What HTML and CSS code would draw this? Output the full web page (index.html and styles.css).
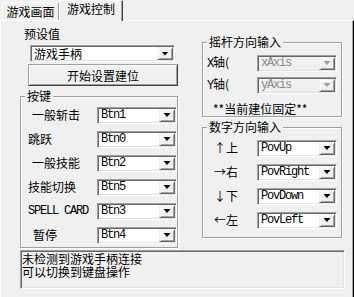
FILE: index.html
```html
<!DOCTYPE html>
<html lang="zh-CN">
<head>
	<meta charset="UTF-8">
	<title>游戏控制</title>
	<link rel="stylesheet" href="styles.css">
</head>
<body>
	<div class="tabs">
		<div class="tab">游戏画面</div>
		<div class="tab active">游戏控制</div>
	</div>
	<div class="page">
		<div class="cols">
			<div class="left">
				<div class="preset-label">预设值</div>
				<div class="combo wide"><span class="val cjk">游戏手柄</span><span class="drop"></span></div>
				<button class="btn">开始设置建位</button>
				<fieldset class="group keys">
					<legend>按键</legend>
					<div class="row"><span class="name indent">一般斩击</span><div class="combo"><span class="val">Btn1</span><span class="drop"></span></div></div>
					<div class="row"><span class="name">跳跃</span><div class="combo"><span class="val">Btn0</span><span class="drop"></span></div></div>
					<div class="row"><span class="name indent">一般技能</span><div class="combo"><span class="val">Btn2</span><span class="drop"></span></div></div>
					<div class="row"><span class="name">技能切换</span><div class="combo"><span class="val">Btn5</span><span class="drop"></span></div></div>
					<div class="row"><span class="name mono">SPELL CARD</span><div class="combo"><span class="val">Btn3</span><span class="drop"></span></div></div>
					<div class="row"><span class="name indent2">暂停</span><div class="combo"><span class="val">Btn4</span><span class="drop"></span></div></div>
				</fieldset>
			</div>
			<div class="right">
				<fieldset class="group stick">
					<legend>摇杆方向输入</legend>
					<div class="srow"><span class="axis"><span class="mono">X</span>轴(</span><div class="combo off"><span class="val">xAxis</span><span class="drop"></span></div></div>
					<div class="srow"><span class="axis"><span class="mono">Y</span>轴(</span><div class="combo off"><span class="val">yAxis</span><span class="drop"></span></div></div>
					<div class="note">**当前建位固定**</div>
				</fieldset>
				<fieldset class="group pad">
					<legend>数字方向输入</legend>
					<div class="row"><span class="dir">↑上</span><div class="combo"><span class="val">PovUp</span><span class="drop"></span></div></div>
					<div class="row"><span class="dir">→右</span><div class="combo"><span class="val">PovRight</span><span class="drop"></span></div></div>
					<div class="row"><span class="dir">↓下</span><div class="combo"><span class="val">PovDown</span><span class="drop"></span></div></div>
					<div class="row"><span class="dir">←左</span><div class="combo"><span class="val">PovLeft</span><span class="drop"></span></div></div>
				</fieldset>
			</div>
		</div>
		<div class="status">未检测到游戏手柄连接<br>可以切换到键盘操作</div>
	</div>
</body>
</html>
```

FILE: styles.css
```css
*{margin:0;padding:0;box-sizing:border-box}
body{width:354px;height:297px;overflow:hidden;background:#f0f0f0;color:#000;font:12px/12px "Noto Sans CJK SC",sans-serif}
.mono{font-family:"Liberation Mono",monospace;font-size:12px;letter-spacing:-1.2px}

/* tabs */
.tabs{display:flex;align-items:flex-end;height:20px;padding-left:2px}
.tab{width:57px;height:18px;padding-top:3px;text-align:center;border-top:1px solid #fff;border-left:1px solid #fff;border-right:1px solid #a0a0a0}
.tab.active{position:relative;z-index:1;width:64px;height:21px;margin-bottom:-1px;padding-top:2px;background:#f0f0f0;border-right:1px solid #404040;box-shadow:inset -1px 0 #a0a0a0}

.page{height:277px;padding-left:19px;border-top:1px solid #fff;border-left:1px solid #fff;border-right:1px solid #000;box-shadow:inset -1px 0 #a0a0a0}
.cols{display:flex;gap:24px;align-items:flex-start}
.left{width:158px}
.right{width:140px;margin-top:15px}

.preset-label{margin:6px 0 0 4px;line-height:14px}

/* combo box */
.combo{display:flex;width:80px;height:17px;background:#fff;border:1px solid;border-color:#a0a0a0 #fff #fff #a0a0a0;box-shadow:inset 1px 1px #696969,inset -1px -1px #e3e3e3;padding:1px}
.combo .val{flex:1;display:flex;align-items:center;padding-left:2px;font-family:"Liberation Mono",monospace;font-size:12px;letter-spacing:-1.2px;white-space:nowrap}
.combo .val.cjk{font-family:"Noto Sans CJK SC",sans-serif;letter-spacing:0}
.combo .drop{display:flex;align-items:center;justify-content:center;width:16px;background:#f0f0f0;border:1px solid;border-color:#f0f0f0 #696969 #696969 #f0f0f0;box-shadow:inset 1px 1px #fff,inset -1px -1px #a0a0a0}
.combo .drop::after{content:"";width:7px;height:4px;background:#000;clip-path:polygon(0 0,100% 0,50% 100%)}
.combo.wide{width:145px;margin:4px 0 0 10px}
.combo.off{background:#f0f0f0}
.combo.off .val{color:#8a8a8a}
.combo.off .drop::after{background:#a0a0a0}

.btn{display:block;width:150px;height:22px;margin:2px 0 0 8px;background:#f0f0f0;font:12px "Noto Sans CJK SC",sans-serif;border:1px solid;border-color:#a0a0a0 #404040 #404040 #a0a0a0;box-shadow:inset 1px 1px #fff,inset -1px -1px #a0a0a0}

/* group boxes */
.group{border:1px solid #a0a0a0;box-shadow:inset 1px 1px #fff,1px 1px #fff}
.group legend{margin-left:4px;padding:0 2px;line-height:12px;background:#f0f0f0}
.keys{width:158px;margin-top:4px;padding:1px 0 0}
.row{display:flex;align-items:center;height:24px}
.name{width:76px;padding-left:7px;white-space:nowrap}
.name.indent{padding-left:11px}
.name.indent2{padding-left:12px}
.name.mono{padding-left:7px}

.stick{width:140px;padding:4px 0 0}
.srow{display:flex;align-items:center;height:22px}
.axis{width:54px;padding-left:4px}
.note{margin-top:6px;padding-left:10px;line-height:14px}

.pad{width:140px;margin-top:4px;padding:3px 0 5px}
.dir{width:54px;padding-right:19px;text-align:right}

.status{width:325px;height:39px;margin-top:2px;padding:1px 0 0 1px;line-height:13px;border:1px solid;border-color:#a0a0a0 #fff #fff #a0a0a0;box-shadow:inset 1px 1px #696969,inset -1px -1px #e3e3e3}
```
